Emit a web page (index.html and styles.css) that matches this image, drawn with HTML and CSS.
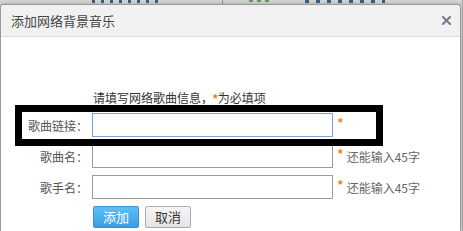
FILE: index.html
```html
<!DOCTYPE html>
<html lang="zh-CN">

<head>
    <meta charset="UTF-8">
    <meta name="viewport" content="width=device-width, initial-scale=1.0">
    <title>添加网络背景音乐</title>
    <link rel="stylesheet" href="styles.css">
</head>

<body>
    <!-- 页面底层（被遮住，只露出一点） -->
    <div class="page-bg">
        <div class="page-nav">
            <span class="nav-a"></span>
            <span class="nav-sep"></span>
            <span class="nav-dot"></span>
            <span class="nav-b"></span>
        </div>
    </div>

    <!-- 弹出框 -->
    <div class="dialog">
        <div class="dialog-title">添加网络背景音乐
            <a href="javascript:;" class="dialog-close">
                <svg width="9" height="9" viewBox="0 0 9 9">
                    <path d="M1 1L8 8M8 1L1 8" stroke="#6f7c8b" stroke-width="2" stroke-linecap="square" />
                </svg>
            </a>
        </div>
        <div class="dialog-body">
            <p class="form-tip">请填写网络歌曲信息，<em>*</em>为必填项</p>
            <div class="form-row">
                <label>歌曲链接：</label>
                <input type="text" class="form-input focus">
                <em>*</em>
            </div>
            <div class="form-row">
                <label>歌曲名：</label>
                <input type="text" class="form-input">
                <em>*</em><span class="form-hint">还能输入45字</span>
            </div>
            <div class="form-row">
                <label>歌手名：</label>
                <input type="text" class="form-input">
                <em>*</em><span class="form-hint">还能输入45字</span>
            </div>
            <div class="form-btns">
                <a href="javascript:;" class="btn btn-blue">添加</a>
                <a href="javascript:;" class="btn btn-gray">取消</a>
            </div>
        </div>
    </div>

    <!-- 标注框 -->
    <div class="mark"></div>
</body>

</html>
```

FILE: styles.css
```css
* {
    padding: 0px;
    margin: 0px;
    box-sizing: border-box;
}

body {
    width: 463px;
    height: 231px;
    overflow: hidden;
    position: relative;
    background: #d9d9d9;
    font-family: "Noto Sans CJK SC", "Liberation Sans", sans-serif;
    font-size: 12px;
}

a {
    text-decoration: none;
}

em {
    font-style: normal;
}

.page-bg {
    height: 231px;
    background: #dcdcdc;
    border-right: 1px solid #a8a8a8;
}

.page-nav {
    height: 5px;
    background: #d2d2d2;
    display: flex;
    align-items: flex-start;
}

.nav-a {
    width: 70px;
    height: 3px;
    margin-left: 92px;
    background: repeating-linear-gradient(90deg, #36607f 0 3px, transparent 3px 9px);
}

.nav-sep {
    width: 1px;
    height: 5px;
    margin-left: 60px;
    background: #9c9c9c;
}

.nav-dot {
    width: 22px;
    height: 2px;
    margin-left: 26px;
    background: repeating-linear-gradient(90deg, #6a9a5a 0 4px, transparent 4px 8px);
}

.nav-b {
    width: 80px;
    height: 3px;
    margin-left: 34px;
    background: repeating-linear-gradient(90deg, #36607f 0 4px, transparent 4px 11px);
}

.dialog {
    position: absolute;
    left: 0px;
    top: 4px;
    width: 461px;
    height: 227px;
    background: #ffffff;
    border: 1px solid #9a9a9a;
    border-bottom: none;
    border-radius: 4px 4px 0 0;
    box-shadow: 0px 0px 3px rgba(0, 0, 0, .3);
}

.dialog-title {
    height: 32px;
    line-height: 31px;
    padding-left: 10px;
    font-size: 13px;
    color: #444;
    background: #f1f1f1;
    border-bottom: 1px solid #dcdcdc;
    border-radius: 4px 4px 0 0;
    position: relative;
}

.dialog-close {
    position: absolute;
    right: 9px;
    top: 11px;
    width: 9px;
    height: 9px;
    display: block;
}

.dialog-close svg {
    display: block;
}

.dialog-body {
    padding-top: 52px;
}

.form-tip {
    padding-left: 92px;
    line-height: 18px;
    height: 18px;
    margin-bottom: 6px;
    color: #333;
}

.form-tip em,
.form-row em {
    color: #ff7a00;
    font-family: "Liberation Sans", sans-serif;
    font-weight: bold;
}

.form-row {
    display: flex;
    align-items: center;
    height: 24px;
    margin-bottom: 7px;
    color: #555;
}

.form-row label {
    width: 87px;
    text-align: right;
    margin-right: 4px;
}

.form-input {
    width: 241px;
    height: 24px;
    border: 1px solid #9b9b9b;
    outline: none;
    background: #fff;
}

.form-input.focus {
    border-color: #7fa3d9;
    box-shadow: inset 0 0 1px #b9cdee;
}

.form-row em {
    margin-left: 5px;
    align-self: flex-start;
    line-height: 18px;
    padding-top: 1px;
}

.form-hint {
    margin-left: 4px;
    color: #666;
}

.form-btns {
    display: flex;
    gap: 6px;
    padding-left: 92px;
}

.btn {
    display: block;
    width: 46px;
    height: 22px;
    line-height: 20px;
    text-align: center;
    font-size: 13px;
    border-radius: 2px;
}

.btn-blue {
    color: #fff;
    border: 1px solid #3a8fcf;
    background: linear-gradient(#5fc0f4, #3a9de2);
}

.btn-gray {
    color: #333;
    border: 1px solid #adadad;
    background: linear-gradient(#f6f6f6, #e4e4e4);
}

.mark {
    position: absolute;
    left: 15px;
    top: 105px;
    width: 368px;
    height: 41px;
    border: 7px solid #000;
}
```
